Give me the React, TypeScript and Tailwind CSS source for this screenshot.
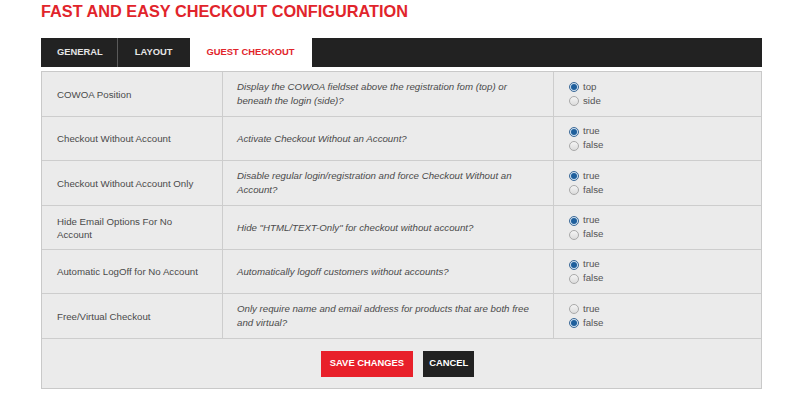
import React from 'react';

type Setting = {
  label: string;
  desc: string;
  options: string[];
  value: string;
  h: string;
};

const settings: Setting[] = [
  {
    label: 'COWOA Position',
    desc: 'Display the COWOA fieldset above the registration fom (top) or beneath the login (side)?',
    options: ['top', 'side'],
    value: 'top',
    h: 'h-[45px]',
  },
  {
    label: 'Checkout Without Account',
    desc: 'Activate Checkout Without an Account?',
    options: ['true', 'false'],
    value: 'true',
    h: 'h-[44px]',
  },
  {
    label: 'Checkout Without Account Only',
    desc: 'Disable regular login/registration and force Checkout Without an Account?',
    options: ['true', 'false'],
    value: 'true',
    h: 'h-[45px]',
  },
  {
    label: 'Hide Email Options For No Account',
    desc: 'Hide "HTML/TEXT-Only" for checkout without account?',
    options: ['true', 'false'],
    value: 'true',
    h: 'h-[44px]',
  },
  {
    label: 'Automatic LogOff for No Account',
    desc: 'Automatically logoff customers without accounts?',
    options: ['true', 'false'],
    value: 'true',
    h: 'h-[44px]',
  },
  {
    label: 'Free/Virtual Checkout',
    desc: 'Only require name and email address for products that are both free and virtual?',
    options: ['true', 'false'],
    value: 'false',
    h: 'h-[45px]',
  },
];

const Radio = ({ checked }: { checked: boolean }) =>
  checked ? (
    <span className="flex h-[10px] w-[10px] items-center justify-center rounded-full border border-[#3d6a98] bg-[#cfe0f0]">
      <span className="h-[6px] w-[6px] rounded-full bg-[#1f5f9c]" />
    </span>
  ) : (
    <span className="h-[10px] w-[10px] rounded-full border border-[#a9a9a9] bg-gradient-to-b from-[#f4f4f4] to-[#dcdcdc]" />
  );

const App = () => {
  return (
    <div className="min-h-[412px] w-[800px] bg-white font-['Liberation_Sans',Arial,sans-serif]">
      <div className="ml-[41px] w-[721px] pt-[2px]">
        <h1 className="text-[16.3px] font-bold leading-[18px] text-[#e1242b]">
          FAST AND EASY CHECKOUT CONFIGURATION
        </h1>

        <div className="mt-[18px] flex h-[29px] bg-[#222222] text-[9.4px] font-bold">
          <div className="flex items-center border-r border-[#5a5a5a] pl-4 pr-[14px] text-[#e6e6e6]">GENERAL</div>
          <div className="flex items-center px-[17px] text-[#e6e6e6]">LAYOUT</div>
          <div className="flex items-center bg-white px-[17px] text-[#e1242b]">GUEST CHECKOUT</div>
        </div>

        <div className="mt-[4px] border border-[#c9c9c9] bg-[#ebebeb] text-[9.7px] text-[#4a4a4a]">
          {settings.map((s) => (
            <div key={s.label} className={`flex border-b border-[#cdcdcd] ${s.h}`}>
              <div className="flex w-[181px] items-center border-r border-[#cdcdcd] px-[15px] leading-[13px]">
                {s.label}
              </div>
              <div className="flex w-[331px] items-center border-r border-[#cdcdcd] px-[14px] italic leading-[14px]">
                {s.desc}
              </div>
              <div className="flex flex-1 flex-col justify-center px-[15px] text-[#555555]">
                {s.options.map((o) => (
                  <label key={o} className="flex h-[14px] items-center gap-[4px]">
                    <Radio checked={o === s.value} />
                    <span>{o}</span>
                  </label>
                ))}
              </div>
            </div>
          ))}

          <div className="flex h-[49px] items-center justify-center gap-[10px] pr-[8px]">
            <button className="h-[26px] bg-[#e8202a] px-[9px] text-[9.4px] font-bold text-white">
              SAVE CHANGES
            </button>
            <button className="h-[26px] bg-[#222222] px-[6px] text-[9.4px] font-bold text-white">
              CANCEL
            </button>
          </div>
        </div>
      </div>
    </div>
  );
};

export default App;
